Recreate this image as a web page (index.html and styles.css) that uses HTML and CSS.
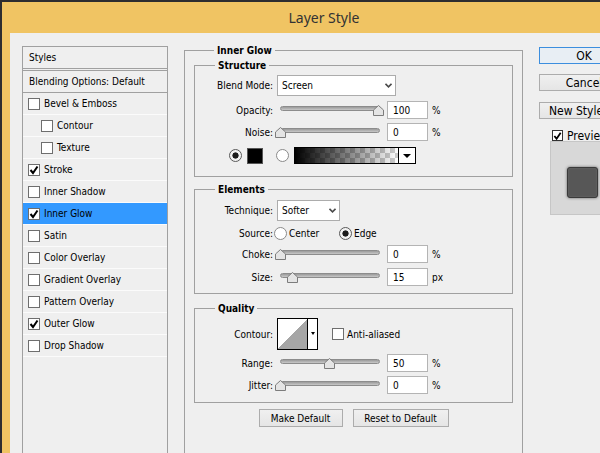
FILE: index.html
```html
<!DOCTYPE html>
<html>
<head>
<meta charset="utf-8">
<title>Layer Style</title>
<link rel="stylesheet" href="styles.css">
</head>
<body>
<div class="window">
  <div class="frame">
    <div class="titlebar">Layer Style</div>
    <div class="client">
      <div class="styles-panel">
        <div class="sp-head">Styles</div>
        <div class="sp-blend">Blending Options: Default</div>
        <div class="sp-item"><span class="cb"></span>Bevel &amp; Emboss</div>
        <div class="sp-item sub"><span class="cb"></span>Contour</div>
        <div class="sp-item sub"><span class="cb"></span>Texture</div>
        <div class="sp-item"><span class="cb"><svg class="tick" viewBox="0 0 10 10"><polyline points="1.5,5 4,8 8.5,1.5"/></svg></span>Stroke</div>
        <div class="sp-item"><span class="cb"></span>Inner Shadow</div>
        <div class="sp-item active"><span class="cb"><svg class="tick" viewBox="0 0 10 10"><polyline points="1.5,5 4,8 8.5,1.5"/></svg></span>Inner Glow</div>
        <div class="sp-item"><span class="cb"></span>Satin</div>
        <div class="sp-item"><span class="cb"></span>Color Overlay</div>
        <div class="sp-item"><span class="cb"></span>Gradient Overlay</div>
        <div class="sp-item"><span class="cb"></span>Pattern Overlay</div>
        <div class="sp-item"><span class="cb"><svg class="tick" viewBox="0 0 10 10"><polyline points="1.5,5 4,8 8.5,1.5"/></svg></span>Outer Glow</div>
        <div class="sp-item"><span class="cb"></span>Drop Shadow</div>
      </div>

      <div class="main">
        <div class="group outer">
          <div class="legend">Inner Glow</div>

          <div class="group structure">
            <div class="legend">Structure</div>
            <div class="row r-blend">
              <span class="lbl">Blend Mode:</span>
              <div class="select w-blend"><span>Screen</span><svg class="chev" viewBox="0 0 7 5"><polyline points="0.5,0.8 3.5,3.8 6.5,0.8"/></svg></div>
            </div>
            <div class="row r-slider m5">
              <span class="lbl">Opacity:</span>
              <div class="slider"><div class="track"></div><svg class="thumb" style="left:96px" viewBox="0 0 11 11"><polygon points="5.5,0.5 10.5,5 10.5,10.5 0.5,10.5 0.5,5"/></svg></div>
              <div class="num">100</div><span class="unit">%</span>
            </div>
            <div class="row r-slider m4">
              <span class="lbl">Noise:</span>
              <div class="slider"><div class="track"></div><svg class="thumb" style="left:-2px" viewBox="0 0 11 11"><polygon points="5.5,0.5 10.5,5 10.5,10.5 0.5,10.5 0.5,5"/></svg></div>
              <div class="num">0</div><span class="unit">%</span>
            </div>
            <div class="row r-color">
              <span class="radio on"></span>
              <span class="swatch"></span>
              <span class="radio r2"></span>
              <div class="gradient"><div class="grad-fill"></div><div class="grad-arrow"><span class="tri"></span></div></div>
            </div>
          </div>

          <div class="group elements">
            <div class="legend">Elements</div>
            <div class="row r-tech">
              <span class="lbl">Technique:</span>
              <div class="select w-tech"><span>Softer</span><svg class="chev" viewBox="0 0 7 5"><polyline points="0.5,0.8 3.5,3.8 6.5,0.8"/></svg></div>
            </div>
            <div class="row r-source">
              <span class="lbl">Source:</span>
              <div class="ropt center"><span class="radio"></span><span>Center</span></div>
              <div class="ropt"><span class="radio on"></span><span>Edge</span></div>
            </div>
            <div class="row r-slider m5">
              <span class="lbl">Choke:</span>
              <div class="slider"><div class="track"></div><svg class="thumb" style="left:-2px" viewBox="0 0 11 11"><polygon points="5.5,0.5 10.5,5 10.5,10.5 0.5,10.5 0.5,5"/></svg></div>
              <div class="num">0</div><span class="unit">%</span>
            </div>
            <div class="row r-slider m5">
              <span class="lbl">Size:</span>
              <div class="slider"><div class="track"></div><svg class="thumb" style="left:10px" viewBox="0 0 11 11"><polygon points="5.5,0.5 10.5,5 10.5,10.5 0.5,10.5 0.5,5"/></svg></div>
              <div class="num">15</div><span class="unit">px</span>
            </div>
          </div>

          <div class="group quality">
            <div class="legend">Quality</div>
            <div class="row r-contour">
              <span class="lbl">Contour:</span>
              <div class="contour"><div class="contour-prev"></div><div class="contour-arrow"><span class="tri small"></span></div></div>
              <span class="cb aa"></span><span class="aa-text">Anti-aliased</span>
            </div>
            <div class="row r-slider m4">
              <span class="lbl">Range:</span>
              <div class="slider"><div class="track"></div><svg class="thumb" style="left:47px" viewBox="0 0 11 11"><polygon points="5.5,0.5 10.5,5 10.5,10.5 0.5,10.5 0.5,5"/></svg></div>
              <div class="num">50</div><span class="unit">%</span>
            </div>
            <div class="row r-slider m4">
              <span class="lbl">Jitter:</span>
              <div class="slider"><div class="track"></div><svg class="thumb" style="left:-2px" viewBox="0 0 11 11"><polygon points="5.5,0.5 10.5,5 10.5,10.5 0.5,10.5 0.5,5"/></svg></div>
              <div class="num">0</div><span class="unit">%</span>
            </div>
          </div>

          <div class="btnrow">
            <div class="btn w-make">Make Default</div>
            <div class="btn w-reset">Reset to Default</div>
          </div>
        </div>
      </div>

      <div class="side">
        <div class="btn sbtn ok">OK</div>
        <div class="btn sbtn cancel">Cancel</div>
        <div class="btn sbtn newstyle">New Style...</div>
        <div class="preview-row"><span class="cb pcb"><svg class="tick" viewBox="0 0 10 10"><polyline points="1.5,5 4,8 8.5,1.5"/></svg></span><span>Preview</span></div>
        <div class="preview-box"><div class="preview-sq"></div></div>
      </div>
    </div>
  </div>
</div>
</body>
</html>
```

FILE: styles.css
```css
* { box-sizing: border-box; }
html, body { margin: 0; padding: 0; }
body {
  width: 600px;
  height: 453px;
  overflow: hidden;
  background: #2d2d30;
  font-family: "DejaVu Sans Condensed", "DejaVu Sans", sans-serif;
  font-stretch: condensed;
  font-size: 10px;
  color: #000;
}
.window {
  width: 648px;
  height: 453px;
  padding: 2px 2px 0 2px;
  background: #2d2d30;
}
.frame {
  height: 100%;
  background: #f0c463;
  padding: 0 8px;
  display: flex;
  flex-direction: column;
}
.titlebar {
  height: 31px;
  flex-shrink: 0;
  display: flex;
  align-items: center;
  justify-content: center;
  font-family: "Noto Sans", "Open Sans", sans-serif;
  font-stretch: normal;
  font-size: 14px;
  color: #333;
}
.client {
  flex: 1;
  background: #efefef;
  display: flex;
  align-items: flex-start;
  padding: 13px 0 0 12px;
  overflow: hidden;
}

/* left styles panel */
.styles-panel {
  width: 146px;
  height: 430px;
  flex-shrink: 0;
  border: 1px solid #a0a0a0;
}
.sp-head {
  height: 24px;
  padding-left: 6px;
  display: flex;
  align-items: center;
  border-bottom: 3px double #a0a0a0;
}
.sp-blend {
  height: 22px;
  padding-left: 6px;
  display: flex;
  align-items: center;
  border-bottom: 1px solid #a0a0a0;
}
.sp-item {
  height: 22px;
  padding-left: 5px;
  display: flex;
  align-items: center;
  gap: 4px;
  border-bottom: 1px solid #fbfbfb;
}
.sp-item.sub { padding-left: 18px; }
.sp-item.active { background: #3399ff; }
.cb {
  width: 12px;
  height: 12px;
  flex-shrink: 0;
  border: 1px solid #6e6e6e;
  background: #fff;
  display: flex;
  align-items: center;
  justify-content: center;
}
.tick { width: 10px; height: 10px; }
.tick polyline { fill: none; stroke: #000; stroke-width: 2; }

/* middle */
.main {
  margin-left: 16px;
  margin-top: 4px;
  flex-shrink: 0;
}
.group {
  border: 1px solid #a0a0a0;
}
.legend {
  display: table;
  height: 13px;
  line-height: 13px;
  margin: -7px 0 0 20px;
  padding: 0 3px;
  background: #efefef;
  font-weight: bold;
}
.outer {
  width: 339px;
  min-height: 420px;
  padding: 0 9px;
}
.structure {
  width: 319px;
  margin-top: 8px;
  padding-bottom: 12px;
}
.elements {
  margin-top: 12px;
  padding-bottom: 7px;
}
.quality {
  margin-top: 14px;
  padding-bottom: 8px;
}
.row {
  display: flex;
  align-items: center;
}
.lbl {
  width: 78px;
  flex-shrink: 0;
  text-align: right;
}
.r-blend { margin-top: 3px; height: 21px; }
.r-slider { height: 18px; }
.m4 { margin-top: 4px; }
.m5 { margin-top: 5px; }
.select {
  margin-left: 4px;
  height: 21px;
  border: 1px solid #acacac;
  background: #fff;
  display: flex;
  align-items: center;
  justify-content: space-between;
  padding: 0 3px 0 4px;
}
.w-blend { width: 119px; }
.w-tech { width: 63px; }
.chev { width: 7px; height: 5px; }
.chev polyline { fill: none; stroke: #4a4a4a; stroke-width: 1.6; }
.slider {
  position: relative;
  width: 107px;
  height: 18px;
  margin-left: 4px;
  padding: 5px 4px 0 3px;
}
.track {
  height: 5px;
  border: 1px solid #8c8c8c;
  border-radius: 3px;
  background: linear-gradient(#9a9a9a, #c8c8c8);
}
.thumb {
  position: absolute;
  top: 4px;
  width: 11px;
  height: 11px;
}
.thumb polygon { fill: #e4e4e4; stroke: #7c7c7c; stroke-width: 1; stroke-linejoin: round; }
.num {
  width: 41px;
  height: 18px;
  margin-left: 3px;
  border: 1px solid #b4b4b4;
  background: #fff;
  padding-left: 5px;
  display: flex;
  align-items: center;
}
.unit { margin-left: 4px; }

.r-color {
  margin-top: 6px;
  height: 17px;
  padding-left: 34px;
}
.radio {
  width: 13px;
  height: 13px;
  flex-shrink: 0;
  border-radius: 50%;
  border: 1px solid #8a8a8a;
  background: #fff;
}
.radio.on {
  border-color: #5a5a5a;
  background: radial-gradient(circle, #1c1c1c 0 2.8px, #f2f2f2 3.4px);
}
.swatch {
  width: 16px;
  height: 16px;
  margin-left: 5px;
  background: #000;
  border: 1px solid #555;
}
.r2 { margin-left: 13px; }
.gradient {
  width: 122px;
  height: 17px;
  margin-left: 5px;
  border: 1px solid #000;
  display: flex;
}
.grad-fill {
  flex: 1;
  background:
    linear-gradient(to right, #000, rgba(0,0,0,0)),
    repeating-conic-gradient(#cdcdcd 0 25%, #ffffff 0 50%) 0 0 / 10px 10px;
}
.grad-arrow {
  width: 17px;
  border-left: 1px solid #000;
  background: #fff;
  display: flex;
  align-items: center;
  justify-content: center;
}
.tri {
  width: 0;
  height: 0;
  border-left: 4px solid transparent;
  border-right: 4px solid transparent;
  border-top: 4px solid #000;
}
.tri.small {
  border-left-width: 2.5px;
  border-right-width: 2.5px;
  border-top-width: 3px;
}

.r-tech { margin-top: 4px; height: 21px; }
.r-source { margin-top: 5px; height: 14px; }
.ropt {
  display: flex;
  align-items: center;
  gap: 2px;
}
.ropt.center { width: 65px; margin-left: 1px; }

.r-contour { margin-top: 3px; height: 32px; }
.contour {
  width: 41px;
  height: 32px;
  margin-left: 4px;
  border: 1px solid #000;
  display: flex;
}
.contour-prev {
  flex: 1;
  background: linear-gradient(to top left, #a6a6a6 50%, #ffffff 50%);
}
.contour-arrow {
  width: 10px;
  border-left: 1px solid #000;
  background: #fff;
  display: flex;
  justify-content: center;
  padding-top: 13px;
}
.aa { margin-left: 14px; }
.aa-text { margin-left: 3px; }

.btnrow {
  margin-top: 6px;
  display: flex;
  justify-content: center;
  gap: 10px;
}
.btn {
  height: 18px;
  border: 1px solid #acacac;
  background: linear-gradient(#f0f0f0, #e5e5e5);
  display: flex;
  align-items: center;
  justify-content: center;
}
.w-make { width: 84px; }
.w-reset { width: 96px; }

/* right column */
.side {
  margin-left: 16px;
  margin-top: 1px;
  width: 100px;
  flex-shrink: 0;
  font-size: 12px;
}
.sbtn {
  width: 90px;
  height: 17px;
}
.ok { border-color: #3c8ede; background: #e8eef4; }
.cancel { margin-top: 10px; }
.newstyle { margin-top: 11px; justify-content: flex-start; padding-left: 9px; }
.preview-row {
  margin-top: 11px;
  height: 11px;
  padding-left: 13px;
  display: flex;
  align-items: center;
  gap: 4px;
}
.pcb { width: 11px; height: 11px; border-color: #333; }
.preview-box {
  margin-left: 11px;
  width: 65px;
  height: 74px;
  background: #d8d8d8;
  border: 1px solid #c6c6c6;
  padding: 25px 0 0 16px;
}
.preview-sq {
  width: 31px;
  height: 31px;
  background: #575757;
  border: 1px solid #3a3a3a;
  border-radius: 3px;
  box-shadow: 0 0 3px rgba(0,0,0,0.55), inset 0 0 2px rgba(255,255,255,0.15);
}
```
